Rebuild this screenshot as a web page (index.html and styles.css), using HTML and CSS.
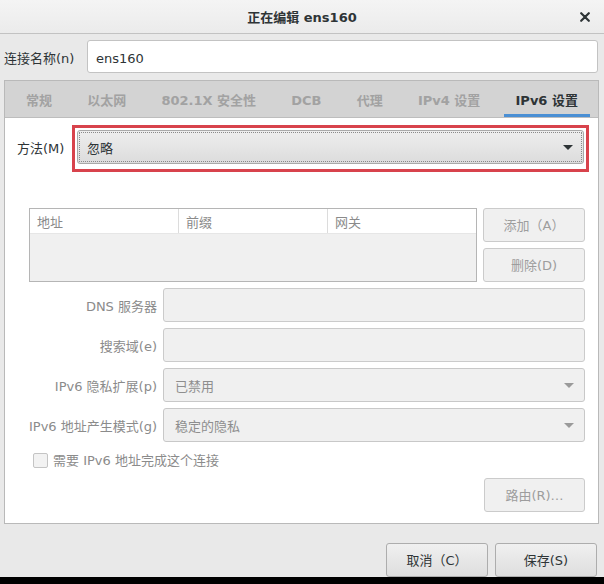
FILE: index.html
```html
<!DOCTYPE html>
<html lang="zh-CN">
<head>
<meta charset="utf-8">
<title>正在编辑 ens160</title>
<link rel="stylesheet" href="styles.css">
</head>
<body>
<div class="titlebar">
  <div class="tb-side"></div>
  <div class="tb-title">正在编辑 ens160</div>
  <div class="tb-side tb-close">
    <svg width="10" height="10" viewBox="0 0 10 10"><path d="M1.2 1.2L8.8 8.8M8.8 1.2L1.2 8.8" stroke="#2e3436" stroke-width="2.2" stroke-linecap="round"/></svg>
  </div>
</div>

<div class="name-row">
  <div class="name-label">连接名称(n)</div>
  <div class="entry">ens160</div>
</div>

<div class="notebook">
  <div class="tabs">
    <div class="tab">常规</div>
    <div class="tab">以太网</div>
    <div class="tab">802.1X 安全性</div>
    <div class="tab">DCB</div>
    <div class="tab">代理</div>
    <div class="tab">IPv4 设置</div>
    <div class="tab active">IPv6 设置</div>
  </div>
  <div class="page">
    <div class="method-row">
      <div class="method-label">方法(M)</div>
      <div class="highlight">
        <div class="combo focus"><span>忽略</span><span class="arrow"></span></div>
      </div>
    </div>

    <div class="addr-row">
      <div class="addr-table">
        <div class="addr-head"><div class="col">地址</div><div class="col">前缀</div><div class="col last">网关</div></div>
        <div class="addr-body"></div>
      </div>
      <div class="addr-buttons">
        <div class="btn disabled">添加（A）</div>
        <div class="btn disabled">删除(D)</div>
      </div>
    </div>

    <div class="form">
      <div class="form-label">DNS 服务器</div>
      <div class="entry disabled"></div>
      <div class="form-label">搜索域(e)</div>
      <div class="entry disabled"></div>
      <div class="form-label">IPv6 隐私扩展(p)</div>
      <div class="combo disabled"><span>已禁用</span><span class="arrow"></span></div>
      <div class="form-label">IPv6 地址产生模式(g)</div>
      <div class="combo disabled"><span>稳定的隐私</span><span class="arrow"></span></div>
    </div>

    <div class="check-row">
      <span class="checkbox"></span>
      <span class="check-label">需要 IPv6 地址完成这个连接</span>
    </div>

    <div class="route-row">
      <div class="btn disabled route">路由(R)…</div>
    </div>
  </div>
</div>

<div class="footer">
  <div class="btn action">取消（C）</div>
  <div class="btn action">保存(S)</div>
</div>
<div class="bottom-bar"></div>
</body>
</html>
```

FILE: styles.css
```css
* { box-sizing: border-box; }

html, body {
  margin: 0;
  padding: 0;
}

body {
  width: 604px;
  height: 584px;
  overflow: hidden;
  background: #e9e9e9;
  font-family: "DejaVu Sans", "Noto Sans CJK SC", sans-serif;
  font-size: 13px;
  line-height: 16px;
  color: #2e3436;
  display: flex;
  flex-direction: column;
}

/* title bar */
.titlebar {
  height: 34px;
  flex: 0 0 34px;
  display: flex;
  align-items: center;
  background: linear-gradient(#f4f4f4, #ebebeb);
  border-bottom: 1px solid #c2c2c2;
}
.tb-side {
  width: 40px;
  flex: 0 0 40px;
  display: flex;
  align-items: center;
  justify-content: center;
}
.tb-title {
  flex: 1;
  text-align: center;
  font-weight: bold;
  color: #2e3436;
  padding-top: 2px;
}
.tb-close svg { display: block; margin-left: 2px; }

/* connection name */
.name-row {
  margin-top: 6px;
  height: 33px;
  flex: 0 0 33px;
  display: flex;
  align-items: center;
  padding: 0 6px 0 4px;
}
.name-label {
  flex: 0 0 83px;
  color: #2e3436;
  padding-top: 4px;
}
.entry {
  flex: 1;
  height: 33px;
  background: #fff;
  border: 1px solid #c3c3c3;
  border-radius: 3px;
  padding: 4px 8px 0 8px;
  display: flex;
  align-items: center;
  color: #2e3436;
}
.entry.disabled {
  background: #f0f0f0;
  border-color: #cbcbcb;
  height: 34px;
}

/* notebook */
.notebook {
  margin: 7px 5px 0 4px;
  height: 444px;
  flex: 0 0 444px;
  border: 1px solid #b9b9b9;
  display: flex;
  flex-direction: column;
  background: #fff;
}
.tabs {
  height: 36px;
  flex: 0 0 36px;
  background: #d3d3d3;
  display: flex;
  justify-content: space-between;
  padding: 0 8px 0 9px;
}
.tab {
  padding: 6px 12px 0 12px;
  display: flex;
  align-items: center;
  font-weight: bold;
  color: #a2a2a2;
  border-bottom: 3px solid transparent;
}
.tab.active {
  color: #2e3436;
  border-bottom-color: #4a8fd4;
}
.page {
  flex: 1;
  border-top: 1px solid #bdbdbd;
  background: #fff;
  display: flex;
  flex-direction: column;
  padding-top: 7px;
}

/* method row */
.method-row {
  height: 47px;
  display: flex;
  align-items: center;
  padding-left: 12px;
  margin-right: 9px;
}
.method-label {
  flex: 0 0 55px;
  color: #2e3436;
}
.highlight {
  flex: 1;
  height: 47px;
  border: 3px solid #d8434c;
  padding: 2px 2px 5px 2px;
}

/* combo box */
.combo {
  height: 34px;
  border: 1px solid #a9a9a9;
  border-radius: 3px;
  background: linear-gradient(#eeeeee, #dcdcdc);
  display: flex;
  align-items: center;
  justify-content: space-between;
  padding: 4px 10px 0 9px;
  color: #2e3436;
}
.combo.focus {
  outline: 1px dotted #8a8a8a;
  outline-offset: -3px;
}
.arrow {
  width: 0;
  height: 0;
  border-left: 5px solid transparent;
  border-right: 5px solid transparent;
  border-top: 5px solid #2e3436;
  margin-top: -3px;
}
.combo.disabled {
  background: #f0f0f0;
  border-color: #c8c8c8;
  color: #8e8e8e;
  padding-left: 11px;
}
.combo.disabled .arrow {
  border-top-color: #9a9a9a;
}

/* addresses */
.addr-row {
  margin: 36px 13px 0 24px;
  height: 74px;
  display: flex;
  gap: 6px;
}
.addr-table {
  flex: 1;
  border: 1px solid #b5b5b5;
  display: flex;
  flex-direction: column;
}
.addr-head {
  height: 25px;
  flex: 0 0 25px;
  display: flex;
  background: #fff;
  border-bottom: 1px solid #e6e6e6;
}
.col {
  flex: 1;
  padding: 4px 0 0 7px;
  display: flex;
  align-items: center;
  color: #8a8a8a;
  border-right: 1px solid #dcdcdc;
}
.col.last { border-right: none; }
.addr-body {
  flex: 1;
  background: #f0f0f0;
}
.addr-buttons {
  flex: 0 0 102px;
  display: flex;
  flex-direction: column;
  gap: 6px;
}

/* buttons */
.btn {
  height: 34px;
  border: 1px solid #adadad;
  border-radius: 3px;
  background: linear-gradient(#f0f0f0, #dedede);
  display: flex;
  align-items: center;
  justify-content: center;
  color: #2e3436;
  padding-top: 2px;
}
.btn.disabled {
  background: #f0f0f0;
  border-color: #cbcbcb;
  color: #9d9d9d;
}

/* form grid */
.form {
  margin: 6px 13px 0 24px;
  display: grid;
  grid-template-columns: 128px 1fr;
  grid-auto-rows: 34px;
  column-gap: 6px;
  row-gap: 6px;
}
.form-label {
  align-self: center;
  text-align: right;
  white-space: nowrap;
  color: #8b8b8b;
  padding-top: 4px;
}

/* checkbox */
.check-row {
  margin-top: 6px;
  height: 24px;
  display: flex;
  align-items: center;
  padding-left: 28px;
}
.checkbox {
  width: 15px;
  height: 15px;
  border: 1px solid #c4c4c4;
  border-radius: 2px;
  background: #f2f2f2;
  margin-right: 5px;
}
.check-label {
  color: #8b8b8b;
  padding-top: 2px;
}

/* routes */
.route-row {
  margin: 6px 13px 0 0;
  display: flex;
  justify-content: flex-end;
}
.route {
  width: 101px;
}

/* footer */
.footer {
  height: 53px;
  flex: 0 0 53px;
  display: flex;
  justify-content: flex-end;
  gap: 7px;
  padding: 19px 7px 0 0;
}
.btn.action {
  width: 102px;
  height: 34px;
}
.bottom-bar {
  flex: 0 0 7px;
  height: 7px;
  background: #000;
}
```
